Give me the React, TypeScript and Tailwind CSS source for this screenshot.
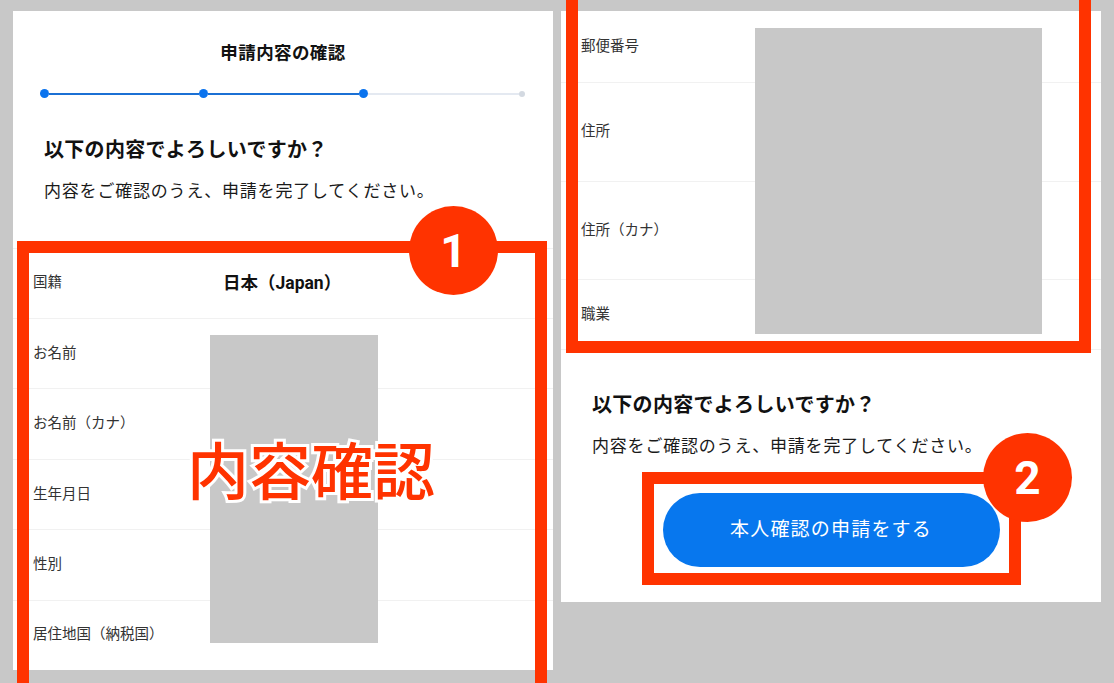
import React from "react";

const leftRows = [
  { label: "国籍", value: "日本（Japan）" },
  { label: "お名前" },
  { label: "お名前（カナ）" },
  { label: "生年月日" },
  { label: "性別" },
  { label: "居住地国（納税国）" },
];

const rightRows = [
  { label: "郵便番号", h: "h-[72px]" },
  { label: "住所", h: "h-[99px]" },
  { label: "住所（カナ）", h: "h-[98px]" },
  { label: "職業", h: "h-[70px]" },
];

function Stepper() {
  return (
    <div className="mt-[23px] h-[10px] flex items-center pl-[26.5px] pr-[28px]">
      <div className="w-[9px] h-[9px] rounded-full bg-[#0a73ee] shrink-0" />
      <div className="flex-1 h-[2px] bg-[#1b70d4]" />
      <div className="w-[9px] h-[9px] rounded-full bg-[#0a73ee] shrink-0" />
      <div className="flex-1 h-[2px] bg-[#1b70d4]" />
      <div className="w-[9px] h-[9px] rounded-full bg-[#0a73ee] shrink-0" />
      <div className="flex-1 h-[2px] bg-[#e4e9f1]" />
      <div className="w-[6px] h-[6px] rounded-full bg-[#d3d9e1] shrink-0" />
    </div>
  );
}

function Confirm({ mt }: { mt: string }) {
  return (
    <div className={`${mt} pl-[31px]`}>
      <div className="text-[20px] font-bold leading-[28px] tracking-[0.3px] text-[#111]">
        以下の内容でよろしいですか？
      </div>
      <div className="mt-[14px] text-[17px] leading-[26px] tracking-[0.8px] text-[#1a1a1a]">
        内容をご確認のうえ、申請を完了してください。
      </div>
    </div>
  );
}

export default function App() {
  return (
    <div className="relative w-[1114px] h-[683px] overflow-hidden bg-[#c8c8c8] flex items-start gap-[8px] pl-[13px] pt-[11px] font-['Roboto','Noto_Sans_CJK_JP',sans-serif]">
      {/* Left panel */}
      <div className="w-[540px] h-[659px] bg-white flex flex-col shrink-0 overflow-hidden">
        <div className="pt-[30px] text-center text-[17.5px] font-bold leading-[25px] tracking-[0.4px] text-[#111]">
          申請内容の確認
        </div>
        <Stepper />
        <Confirm mt="mt-[37px]" />
        <div className="mt-[44px]">
          {leftRows.map((r) => (
            <div
              key={r.label}
              className="h-[70.4px] border-t border-[#f1f1f1] flex items-center pl-[20px]"
            >
              <div className="w-[190px] shrink-0 text-[14.5px] leading-[20px] text-[#333]">
                {r.label}
              </div>
              {r.value && (
                <div className="text-[17.5px] font-bold leading-[24px] text-[#111]">
                  {r.value}
                </div>
              )}
            </div>
          ))}
        </div>
      </div>

      {/* Right panel */}
      <div className="w-[540px] h-[591px] bg-white flex flex-col shrink-0">
        <div>
          {rightRows.map((r) => (
            <div
              key={r.label}
              className={`${r.h} border-b border-[#f1f1f1] flex items-center pl-[20px]`}
            >
              <div className="text-[14.5px] leading-[20px] text-[#333]">{r.label}</div>
            </div>
          ))}
        </div>
        <Confirm mt="mt-[41px]" />
        <button className="mt-[34px] self-center w-[337px] h-[74px] rounded-full bg-[#0777ee] text-white text-[19px] tracking-[1.2px] leading-[26px]">
          本人確認の申請をする
        </button>
      </div>

      {/* Redaction overlays */}
      <div className="absolute left-[210px] top-[335px] w-[168px] h-[308px] bg-[#c8c8c8]" />
      <div className="absolute left-[755px] top-[28px] w-[287px] h-[306px] bg-[#c8c8c8]" />

      {/* Annotation frames */}
      <div className="absolute left-[17px] top-[241px] w-[530px] h-[470px] border-[12px] border-[#ff3300]" />
      <div className="absolute left-[566px] top-[-20px] w-[525px] h-[373px] border-[12px] border-[#ff3300]" />
      <div className="absolute left-[642px] top-[472px] w-[379px] h-[113px] border-[12px] border-[#ff3300]" />

      {/* Big annotation text */}
      <div className="absolute left-[186px] top-[437px] w-[250px] text-center text-[62px] leading-[62px] font-medium text-[#ff3300] font-['Noto_Sans_CJK_JP',sans-serif] [-webkit-text-stroke:6px_#ffffff] [paint-order:stroke_fill]">
        内容確認
      </div>

      {/* Badges */}
      <div className="absolute left-[409px] top-[206px] w-[89px] h-[89px] rounded-full bg-[#ff3300] flex items-center justify-center">
        <span className="text-white text-[46px] font-bold leading-none font-['Roboto',sans-serif]">1</span>
      </div>
      <div className="absolute left-[983px] top-[433px] w-[89px] h-[89px] rounded-full bg-[#ff3300] flex items-center justify-center">
        <span className="text-white text-[46px] font-bold leading-none font-['Roboto',sans-serif]">2</span>
      </div>
    </div>
  );
}
